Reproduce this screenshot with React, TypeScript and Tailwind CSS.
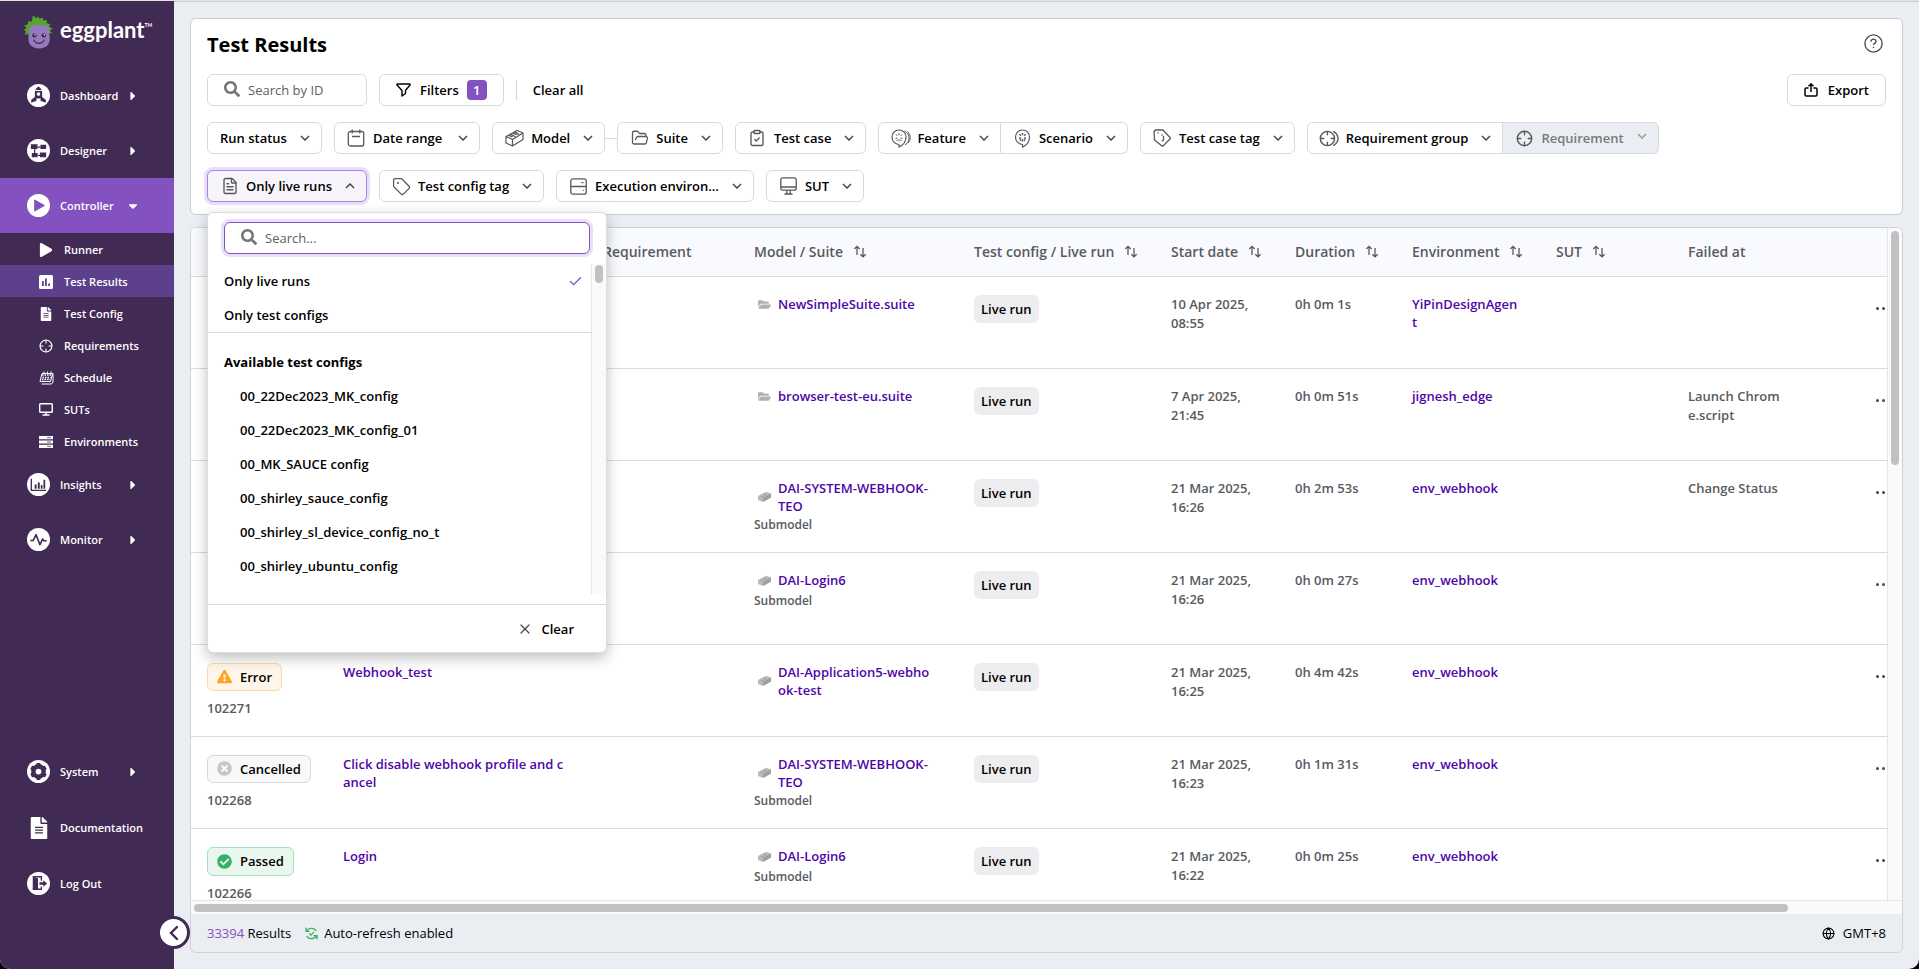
import { useState } from "react";
import type { ReactNode } from "react";
import { clsx } from "clsx";
import { Check, ClipboardCheck, FileText, FolderOpen, Globe, Tag, X } from "lucide-react";
import {
  FaCaretDown,
  FaCaretRight,
  FaCheckCircle,
  FaExclamationTriangle,
  FaFileAlt,
  FaFolderOpen,
  FaPlay,
  FaSearch,
  FaTimesCircle,
} from "react-icons/fa";

/* ---------- icons ---------- */

function Mascot() {
  return (
    <svg width="30" height="34" viewBox="0 0 30 34" className="shrink-0" aria-hidden="true">
      <path
        d="M8.500 1.200c1.600-.7 2.600.4 2.800 2l3-1.800 1 2.400 3.600-1 .4 2.600 4-.2-.8 2.700 4 1.300-1.600 2.200 4 2.600-3 1 2 3.600-3-.4.4 3.400H4.600L4 18.400l-3.200 1.800 1-4-2-1.200 3-2.200L0 10.800l4-1.600.2-3 3.200.6 1-2.800z"
        fill="#55a630"
      />
      <path
        d="M5 15c0-4 4-5 10-5s10.500 1 10.500 5c0 2-.6 3.500.2 7 1 6.500-3 11.500-10.600 11.500S3.500 28.500 4.600 22c.8-3.500.4-5 .4-7z"
        fill="#9479bd"
      />
      <circle cx="10.400" cy="20.400" r="2.200" fill="#412a54" />
      <circle cx="19.800" cy="20.400" r="2.200" fill="#412a54" />
      <circle cx="11" cy="19.800" r=".7" fill="#fff" />
      <circle cx="20.400" cy="19.800" r=".7" fill="#fff" />
      <path d="M9.800 25c2.200 4.400 8.200 4.400 10.400 0" fill="none" stroke="#412a54" strokeWidth="1.200" strokeLinecap="round" />
    </svg>
  );
}

function Disc({ children }: { children: ReactNode }) {
  return (
    <svg width="23" height="23" viewBox="0 0 24 24" fill="#412a54" aria-hidden="true">
      <circle cx="12" cy="12" r="12" fill="#fff" />
      {children}
    </svg>
  );
}

const DashboardIcon = () => (
  <Disc>
    <path d="M12 2.500c2.600 1.600 3.800 3.800 3.800 6v5l3.800 3v3l-4-1.500h-1.400v-3h-4.400v3H8.400l-4 1.500v-3l3.800-3v-5c0-2.200 1.200-4.400 3.800-6z" />
    <circle cx="12" cy="10.500" r="1.900" fill="#fff" />
    <path d="M8.500 6.800h7" stroke="#fff" />
  </Disc>
);

const DesignerIcon = () => (
  <Disc>
    <path d="M4 5.500h7v5H4zM14 6h6v4.500h-6zM5 14.500h6V19H5zM13.500 14h6.500v5h-6.500z" />
    <path d="M11 8.500h3M8 10v5M11 17h3" stroke="#412a54" strokeWidth="1.300" />
  </Disc>
);

const ControllerIcon = () => (
  <Disc>
    <path d="M8 6.200l10.200 5.800L8 17.800z" fill="#8452c0" stroke="#8452c0" strokeLinejoin="round" />
  </Disc>
);

const InsightsIcon = () => (
  <Disc>
    <path d="M4.500 6v12.200H20" fill="none" stroke="#412a54" strokeWidth="1.400" />
    <path d="M8 12h2v4.500H8zM11.300 10h2v6.500h-2zM14.400 12.500h1.800v4h-1.800zM17.200 7H19v9.500h-1.800z" />
  </Disc>
);

const MonitorIcon = () => (
  <Disc>
    <path
      d="M3.500 13h3L9.500 7l4 10.500 2.800-6 1.200 1.800h3"
      fill="none"
      stroke="#412a54"
      strokeWidth="1.700"
      strokeLinejoin="round"
    />
  </Disc>
);

const SystemIcon = () => (
  <Disc>
    <circle cx="12" cy="12" r="6.200" fill="none" stroke="#412a54" strokeWidth="3" />
    <path
      d="M12 3.200v3M12 17.800v3M4.400 7.600L7 9.100M17 14.900l2.600 1.500M4.400 16.400L7 14.900M17 9.100l2.600-1.500"
      stroke="#412a54"
      strokeWidth="4"
    />
    <circle cx="12" cy="12" r="5" fill="#412a54" />
    <circle cx="12" cy="12" r="3" fill="#fff" />
  </Disc>
);

const LogoutIcon = () => (
  <Disc>
    <path d="M6 5l5.500 1.500v12L6 18z" />
    <path d="M6 5h9v4M15 15v3H6" fill="none" stroke="#412a54" strokeWidth="1.400" />
    <path d="M13 10.800h4V8.500l4 3.500-4 3.500v-2.300h-4z" />
  </Disc>
);

const TestResultsIcon = () => (
  <svg width="14" height="14" viewBox="0 0 14 14" fill="#5d408c" aria-hidden="true">
    <rect width="14" height="14" rx="1.500" fill="#fff" />
    <path d="M3 6h1.800v5H3zM6 3.500h1.800V11H6zM9.200 8.500H11V11H9.200z" />
  </svg>
);

function Target({ size = 14, doubled = false }: { size?: number; doubled?: boolean }) {
  return (
    <svg
      width={doubled ? size + 3 : size}
      height={size}
      viewBox={doubled ? "0 0 19 16" : "0 0 16 16"}
      fill="none"
      stroke="currentColor"
      strokeWidth="1.300"
      strokeLinecap="round"
      className="shrink-0"
      aria-hidden="true"
    >
      <circle cx="8" cy="8" r="6.800" />
      <path d="M8 1.500v3M8 11.500v3M1.500 8h3M11.500 8h3" />
      {doubled && <path d="M14 1.500c5.400 3.500 5.400 9.500 0 13" />}
    </svg>
  );
}

const ScheduleIcon = () => (
  <svg width="15" height="14" viewBox="0 0 15 14" fill="none" stroke="#fff" aria-hidden="true">
    <path d="M3 2.500h11v8.500l-1.500 2H2.500" />
    <path d="M3 2.500L1 10.500h10.500l2-8" />
    <path d="M3 4h10M3.500 6.500h8M3 8.500h8" strokeDasharray="1.500 1" strokeWidth="1.300" />
    <path d="M5 .5v2M8.500.5v2M12 .5v2" />
  </svg>
);

const SutIcon = () => (
  <svg width="14" height="13" viewBox="0 0 14 13" fill="none" stroke="#fff" aria-hidden="true">
    <rect x=".7" y=".7" width="12.600" height="8.600" rx=".8" strokeWidth="1.400" />
    <path d="M7 9.500v2M3.500 12h7" strokeWidth="1.600" />
  </svg>
);

const EnvironmentsIcon = () => (
  <svg width="14" height="12" viewBox="0 0 14 12" aria-hidden="true">
    <path d="M0 0h14v3.200H0zM0 4.400h14v3.200H0zM0 8.800h14V12H0z" fill="#fff" />
    <path d="M8 1.600h4M8 6h4M8 10.400h4" stroke="#412a54" strokeWidth=".7" />
  </svg>
);

function Chevron({ up = false }: { up?: boolean }) {
  return (
    <svg width="10" height="6" viewBox="0 0 10 6" fill="none" stroke="currentColor" strokeWidth="1.500" aria-hidden="true">
      <path d={up ? "M1 5l4-4 4 4" : "M1 1l4 4 4-4"} />
    </svg>
  );
}

const CalendarIcon = () => (
  <svg width="18" height="18" viewBox="0 0 18 18" fill="none" stroke="currentColor" strokeWidth="1.300" aria-hidden="true">
    <rect x="1.300" y="2.500" width="15.400" height="14.500" rx="2" />
    <path d="M5.200.5v4M12.800.5v4M5 7.500h8" />
  </svg>
);

const BrickIcon = () => (
  <svg width="19" height="18" viewBox="0 0 19 18" fill="none" stroke="currentColor" strokeWidth="1.200" strokeLinejoin="round" aria-hidden="true">
    <path d="M1 7.500L12 1.500l6 2.500v6.500L7.500 17 1 14zM1 7.500l6.500 3L18 4M7.500 10.500V17" />
    <path d="M4.500 6.800l2-1.200 2 .9-2 1.200zM8.500 4.500l2-1.100 2 .9-2 1.200zM9 8l1.500-.9M12.500 5.800l1.700-1" />
  </svg>
);

const ServerIcon = () => (
  <svg width="17" height="17" viewBox="0 0 17 17" fill="none" stroke="currentColor" strokeWidth="1.300" aria-hidden="true">
    <rect x=".8" y=".8" width="15.400" height="15.400" rx="2" />
    <path d="M.8 8.500h15.400M11.500 4.700h2M12.800 12.300h.9" />
  </svg>
);

const ScreenIcon = () => (
  <svg width="17" height="18" viewBox="0 0 17 18" fill="none" stroke="currentColor" strokeWidth="1.300" aria-hidden="true">
    <rect x=".8" y=".8" width="15.400" height="12.400" rx="2" />
    <path d="M.8 10h15.400M6.800 13.200V16.500M10.200 13.200V16.500M4.500 17h8" />
  </svg>
);

function Gherkin({ doubled = false }: { doubled?: boolean }) {
  return (
    <svg
      width={doubled ? 20 : 17}
      height="19"
      viewBox={doubled ? "0 0 20 19" : "0 0 16 19"}
      fill="none"
      stroke="currentColor"
      strokeWidth="1.200"
      className="shrink-0"
      aria-hidden="true"
    >
      <path d="M8 1c4.200 0 7 3.200 7 7 0 5-3.500 8.500-7 10v-2.500C3.800 15.200 1 12 1 8.300 1 4.200 3.800 1 8 1z" />
      <path
        d="M8 4v2.200M8 10.300v2.200M5 5.200l1.200 1.600M11 5.200L9.800 6.800M4.500 9.500l2-.6M11.500 9.500l-2-.6M5.500 12l1-1.600M10.500 12l-1-1.600"
        strokeWidth={doubled ? 0.9 : 1.4}
      />
      {doubled && <path d="M13.500 1.800c6 3.500 6 11 .5 14M16.500 2.500c3.500 3.500 3.500 8.500.5 11.500" strokeWidth="1" />}
    </svg>
  );
}

const CaseTagIcon = () => (
  <svg width="18" height="18" viewBox="0 0 18 18" fill="none" stroke="currentColor" strokeWidth="1.300" strokeLinejoin="round" aria-hidden="true">
    <path d="M1 2.500L2.500 1H10l7 7.500c.5.500.5 1 0 1.500l-7 7H9L1.500 11z" />
    <path d="M4.500 4h1M10.500 7v3.500c0 1-1 1.500-2 1M8.500 6.500l1-1" />
  </svg>
);

const FunnelIcon = () => (
  <svg width="15" height="14" viewBox="0 0 15 14" fill="none" stroke="currentColor" strokeWidth="1.400" strokeLinejoin="round" aria-hidden="true">
    <path d="M1.500 1h12c.5 0 .7.600.5 1L9.500 7.500v3L6 13V7.500L1 2c-.3-.5 0-1 .5-1z" />
  </svg>
);

const ExportIcon = () => (
  <svg width="14" height="14" viewBox="0 0 14 14" fill="none" stroke="currentColor" strokeWidth="1.500" aria-hidden="true">
    <path d="M4.500 5H2.300Q1 5 1 6.300v5.400Q1 13 2.300 13h9.400q1.300 0 1.300-1.300V6.300Q13 5 11.700 5H9.500M7 9V1M4.500 3.200L7 .9l2.500 2.300" />
  </svg>
);

const HelpIcon = () => (
  <svg width="19" height="19" viewBox="0 0 19 19" fill="none" stroke="#4b4f54" strokeWidth="1.400" aria-hidden="true">
    <circle cx="9.500" cy="9.500" r="8.600" />
    <path d="M7 7.800C7 4.200 12 4.400 12 7.400c0 1.900-2.500 1.700-2.500 3.700M9.500 12.800v1.300" />
  </svg>
);

const SortIcon = () => (
  <svg width="14" height="13" viewBox="0 0 14 13" fill="none" stroke="currentColor" strokeWidth="1.300" aria-hidden="true">
    <path d="M4 10V1.500M1.300 4L4 1.300 6.700 4M10 3v9M7.300 9.200L10 11.900l2.700-2.700" />
  </svg>
);

const SmallBrick = () => (
  <svg width="13" height="11" viewBox="0 0 13 11" aria-hidden="true">
    <path d="M0 5L8 .8l5 1.600v4.200L5 11 0 9z" fill="#b9b9b9" />
    <path d="M5 6.800l8-4.400v4.200L5 11z" fill="#9f9f9f" />
    <path d="M2.500 4.800l2.500 1M5.500 3.300l2.500 1" stroke="#8e8e8e" strokeWidth=".7" fill="none" />
  </svg>
);

const RefreshIcon = () => (
  <svg width="13" height="13" viewBox="0 0 13 13" fill="none" stroke="#35b263" strokeWidth="1.300" aria-hidden="true">
    <path d="M1.500 5C2.500.7 9 0 11.300 4M1 .8v3.500h3.400M11.500 8C10.500 12.300 4 13 1.700 9M12 12.200V8.700H8.600" />
    <path d="M4.300 6.500L6 8.100l3-3.200" />
  </svg>
);

/* ---------- data ---------- */

type NavEntry = { label: string; icon: ReactNode; open?: boolean; leaf?: boolean };

const mainNav: NavEntry[] = [
  { label: "Dashboard", icon: <DashboardIcon /> },
  { label: "Designer", icon: <DesignerIcon /> },
  { label: "Controller", icon: <ControllerIcon />, open: true },
];

const controllerNav = [
  { label: "Runner", icon: <FaPlay size={14} /> },
  { label: "Test Results", icon: <TestResultsIcon />, active: true },
  { label: "Test Config", icon: <FaFileAlt size={14} /> },
  { label: "Requirements", icon: <Target /> },
  { label: "Schedule", icon: <ScheduleIcon /> },
  { label: "SUTs", icon: <SutIcon /> },
  { label: "Environments", icon: <EnvironmentsIcon /> },
];

const lowerNav: NavEntry[] = [
  { label: "Insights", icon: <InsightsIcon /> },
  { label: "Monitor", icon: <MonitorIcon /> },
];

const footerNav: NavEntry[] = [
  { label: "System", icon: <SystemIcon /> },
  { label: "Documentation", icon: <FaFileAlt size={22} />, leaf: true },
  { label: "Log Out", icon: <LogoutIcon />, leaf: true },
];

const testConfigs = [
  "00_22Dec2023_MK_config",
  "00_22Dec2023_MK_config_01",
  "00_MK_SAUCE config",
  "00_shirley_sauce_config",
  "00_shirley_sl_device_config_no_t",
  "00_shirley_ubuntu_config",
];

type Status = "Passed" | "Error" | "Cancelled";

type Run = {
  id?: string;
  status?: Status;
  name?: string;
  model: string;
  kind: "suite" | "model";
  submodel?: boolean;
  start: string;
  duration: string;
  environment: string;
  failedAt?: string;
};

const runs: Run[] = [
  { model: "NewSimpleSuite.suite", kind: "suite", start: "10 Apr 2025, 08:55", duration: "0h 0m 1s", environment: "YiPinDesignAgent" },
  { model: "browser-test-eu.suite", kind: "suite", start: "7 Apr 2025, 21:45", duration: "0h 0m 51s", environment: "jignesh_edge", failedAt: "Launch Chrome.script" },
  { model: "DAI-SYSTEM-WEBHOOK-TEO", kind: "model", submodel: true, start: "21 Mar 2025, 16:26", duration: "0h 2m 53s", environment: "env_webhook", failedAt: "Change Status" },
  { model: "DAI-Login6", kind: "model", submodel: true, start: "21 Mar 2025, 16:26", duration: "0h 0m 27s", environment: "env_webhook" },
  { id: "102271", status: "Error", name: "Webhook_test", model: "DAI-Application5-webhook-test", kind: "model", start: "21 Mar 2025, 16:25", duration: "0h 4m 42s", environment: "env_webhook" },
  { id: "102268", status: "Cancelled", name: "Click disable webhook profile and cancel", model: "DAI-SYSTEM-WEBHOOK-TEO", kind: "model", submodel: true, start: "21 Mar 2025, 16:23", duration: "0h 1m 31s", environment: "env_webhook" },
  { id: "102266", status: "Passed", name: "Login", model: "DAI-Login6", kind: "model", submodel: true, start: "21 Mar 2025, 16:22", duration: "0h 0m 25s", environment: "env_webhook" },
];

const columns = [
  { label: "", width: "w-[136px]" },
  { label: "", width: "w-[260px]" },
  { label: "Requirement", width: "w-[151px]" },
  { label: "Model / Suite", width: "w-[220px]", sortable: true },
  { label: "Test config / Live run", width: "w-[197px]", sortable: true },
  { label: "Start date", width: "w-[124px]", sortable: true },
  { label: "Duration", width: "w-[117px]", sortable: true },
  { label: "Environment", width: "w-[144px]", sortable: true },
  { label: "SUT", width: "w-[132px]", sortable: true },
  { label: "Failed at", width: "w-[128px]" },
  { label: "", width: "w-[112px]" },
];

/* ---------- sidebar ---------- */

function NavItem({ label, icon, open, leaf }: NavEntry) {
  return (
    <a
      href="#"
      className={clsx("flex h-[55px] items-center pl-[27px] text-[11px] font-semibold text-white", open && "bg-[#8452c0]")}
    >
      <span className="flex w-[23px] shrink-0 justify-center">{icon}</span>
      <span className="ml-[10px] w-[66px] whitespace-nowrap">{label}</span>
      {!leaf && (open ? <FaCaretDown size={14} /> : <FaCaretRight size={14} />)}
    </a>
  );
}

function Sidebar() {
  return (
    <nav className="relative z-10 flex w-[174px] shrink-0 flex-col bg-[#412a54]">
      <div className="flex h-[67px] pt-[14px] pl-6">
        <Mascot />
        <span className="ml-[6px] font-[Lato] text-[22px] leading-[30px] font-bold text-white">eggplant</span>
        <span className="font-[Lato] text-[5px] leading-[20px] font-bold text-white">TM</span>
      </div>

      {mainNav.map((item) => (
        <NavItem key={item.label} {...item} />
      ))}
      {controllerNav.map((item) => (
        <a
          key={item.label}
          href="#"
          className={clsx(
            "flex h-8 items-center pt-px pl-[38px] text-[11px] font-semibold text-white",
            item.active && "bg-[#5d408c]",
          )}
        >
          <span className="flex w-4 shrink-0 justify-center">{item.icon}</span>
          <span className="ml-[10px] whitespace-nowrap">{item.label}</span>
        </a>
      ))}
      {lowerNav.map((item) => (
        <NavItem key={item.label} {...item} />
      ))}

      <div className="mt-auto flex flex-col gap-px pb-[58px]">
        {footerNav.map((item) => (
          <NavItem key={item.label} {...item} />
        ))}
      </div>

      <button
        type="button"
        aria-label="Collapse menu"
        className="absolute right-[-16px] bottom-[20px] flex size-[33px] items-center justify-center rounded-full border-[3px] border-[#412a54] bg-white text-[#412a54]"
      >
        <svg width="10" height="16" viewBox="0 0 10 16" fill="none" stroke="currentColor" strokeWidth="2.400" strokeLinecap="round">
          <path d="M8 2L2 8l6 6" />
        </svg>
      </button>
    </nav>
  );
}

/* ---------- filters ---------- */

type FilterProps = {
  label: string;
  icon?: ReactNode;
  open?: boolean;
  disabled?: boolean;
  wide?: boolean;
  join?: "left" | "right";
  onClick?: () => void;
};

function Filter({ label, icon, open, disabled, wide, join, onClick }: FilterProps) {
  return (
    <button
      type="button"
      aria-haspopup="listbox"
      aria-expanded={!!open}
      disabled={disabled}
      onClick={onClick}
      className={clsx(
        "flex h-8 items-center rounded-md border pr-[11px] pl-3 font-semibold whitespace-nowrap",
        open ? "border-[#a984dc] bg-[#f7f4fc] ring-3 ring-[#e9dffb]" : "border-[#d8dade]",
        disabled && "bg-[#eaedf2] text-[#77797d]",
        join === "left" && "rounded-r-none",
        join === "right" && "rounded-l-none border-l-0",
      )}
    >
      {icon && <span className="mr-[7px] flex w-[19px] shrink-0 justify-center text-[#55585c]">{icon}</span>}
      {label}
      <span className={clsx(wide ? "ml-4" : "ml-[13px]", disabled ? "mb-1 text-[#9a9da1]" : "text-[#45484c]")}>
        <Chevron up={open} />
      </span>
    </button>
  );
}

function LiveRunMenu() {
  return (
    <div className="absolute top-[42px] left-0 z-20 w-[400px] rounded-md border border-[#dcdde0] bg-white shadow-[0_5px_14px_rgba(0,0,0,0.25)]">
      <label className="mx-4 mt-[9px] flex h-8 items-center rounded-md border border-[#8452c0] pl-4 ring-3 ring-[#e9dffb]">
        <FaSearch size={16} className="mb-0.5 shrink-0 text-[#757575]" />
        <input
          type="text"
          placeholder="Search..."
          aria-label="Search test configs"
          className="ml-2 min-w-0 flex-1 outline-none placeholder:text-[#5c5f63] placeholder:opacity-100"
        />
      </label>

      <div className="my-[10px] flex h-[330px]">
        <ul role="listbox" aria-label="Test configs" className="flex-1 overflow-hidden font-semibold">
          <li role="option" aria-selected="true" className="flex h-[34px] items-center justify-between pr-2 pl-4">
            Only live runs
            <Check size={15} strokeWidth={2.2} className="text-[#8452c0]" />
          </li>
          <li role="option" aria-selected="false" className="flex h-[35px] items-center border-b border-[#d8dade] pl-4">
            Only test configs
          </li>
          <li role="presentation" className="mt-3 flex h-[34px] items-center pl-4 font-bold">
            Available test configs
          </li>
          {testConfigs.map((config) => (
            <li key={config} role="option" aria-selected="false" className="flex h-[34px] items-center pl-8">
              {config}
            </li>
          ))}
        </ul>
        <div className="w-[15px] border-l border-[#e6e6e6] bg-[#fafafa] px-[3px] pt-px">
          <div className="h-[18px] rounded-full bg-[#c1c1c1]" />
        </div>
      </div>

      <div className="flex h-12 items-center justify-end border-t border-[#d8dade] pr-8">
        <button type="button" className="flex items-center gap-2 font-semibold">
          <X size={16} strokeWidth={1.8} className="text-[#45484c]" />
          Clear
        </button>
      </div>
    </div>
  );
}

function FilterPanel() {
  const [menuOpen, setMenuOpen] = useState(true);

  return (
    <section className="relative z-10 shrink-0 rounded-md border border-[#c9ccd3] bg-white px-4 py-3">
      <div className="mb-[15px] flex items-center justify-between">
        <h1 className="text-xl leading-7 font-bold">Test Results</h1>
        <button type="button" aria-label="Help" className="mr-[3px] mb-1">
          <HelpIcon />
        </button>
      </div>

      <div className="flex items-center">
        <label className="flex h-8 w-40 items-center rounded-md border border-[#d8dade] pl-4">
          <FaSearch size={16} className="mb-0.5 shrink-0 text-[#757575]" />
          <input
            type="text"
            placeholder="Search by ID"
            aria-label="Search by ID"
            className="ml-2 w-full min-w-0 outline-none placeholder:text-[#5c5f63] placeholder:opacity-100"
          />
        </label>
        <button type="button" className="ml-3 flex h-8 items-center rounded-md border border-[#d8dade] px-4 font-semibold">
          <FunnelIcon />
          <span className="ml-[9px]">Filters</span>
          <span className="ml-2 flex size-5 items-center justify-center rounded bg-[#8452c0] text-white">1</span>
        </button>
        <div className="ml-3 h-5 w-px bg-[#d0d3d8]" />
        <button type="button" className="ml-4 font-semibold">
          Clear all
        </button>
        <button type="button" className="ml-auto flex h-8 items-center gap-[10px] rounded-md border border-[#d8dade] px-4 font-semibold">
          <ExportIcon />
          Export
        </button>
      </div>

      <div className="mt-4 flex flex-wrap items-center gap-x-3 gap-y-4">
        <Filter label="Run status" />
        <Filter label="Date range" icon={<CalendarIcon />} wide />
        <div className="flex items-center">
          <Filter label="Model" icon={<BrickIcon />} />
          <span className="h-px w-3 bg-[#d8dade]" />
          <Filter label="Suite" icon={<FolderOpen size={18} strokeWidth={1.7} />} />
        </div>
        <Filter label="Test case" icon={<ClipboardCheck size={18} strokeWidth={1.8} />} />
        <div className="flex">
          <Filter label="Feature" icon={<Gherkin doubled />} join="left" />
          <Filter label="Scenario" icon={<Gherkin />} join="right" />
        </div>
        <Filter label="Test case tag" icon={<CaseTagIcon />} />
        <div className="flex">
          <Filter label="Requirement group" icon={<Target size={17} doubled />} join="left" />
          <Filter label="Requirement" icon={<Target size={17} />} join="right" disabled />
        </div>
      </div>

      <div className="mt-4 flex flex-wrap items-center gap-x-3 gap-y-4">
        <div className="relative">
          <Filter
            label="Only live runs"
            icon={<FileText size={18} strokeWidth={1.8} />}
            open={menuOpen}
            onClick={() => setMenuOpen(!menuOpen)}
          />
          {menuOpen && <LiveRunMenu />}
        </div>
        <Filter label="Test config tag" icon={<Tag size={19} strokeWidth={1.6} />} />
        <Filter label="Execution environ..." icon={<ServerIcon />} />
        <Filter label="SUT" icon={<ScreenIcon />} />
      </div>
    </section>
  );
}

/* ---------- results ---------- */

function StatusBadge({ status }: { status: Status }) {
  return (
    <span
      className={clsx(
        "inline-flex items-center gap-2 rounded-md border px-[9px] text-black",
        status === "Error" && "h-7 border-[#fbd9a4] bg-[#fff5e9]",
        status === "Cancelled" && "h-7 border-[#d8d9db] bg-[#f8f8f9]",
        status === "Passed" && "h-[29px] border-[#a9dfbb] bg-[#e9f7ee]",
      )}
    >
      {status === "Error" && <FaExclamationTriangle size={15} className="text-[#fda429]" />}
      {status === "Cancelled" && <FaTimesCircle size={15} className="text-[#c6c6c6]" />}
      {status === "Passed" && <FaCheckCircle size={15} className="text-[#35b263]" />}
      {status}
    </span>
  );
}

function ResultRow({ run }: { run: Run }) {
  return (
    <tr className="h-[92px] border-t border-[#d8dade] align-top *:px-4 *:pt-[18px]">
      <td>
        {run.status && (
          <div className="flex flex-col items-start pb-[18px]">
            <StatusBadge status={run.status} />
            <span className="mt-2 leading-[19px]">{run.id}</span>
          </div>
        )}
      </td>
      <td className="leading-[18px] break-all">
        {run.name && (
          <a href="#" className="block max-w-[226px] text-[#4e06a8]">
            {run.name}
          </a>
        )}
      </td>
      <td />
      <td>
        <div className="flex min-h-5 items-start">
          <span className="ml-1 flex w-[13px] shrink-0 self-center text-[#b0b0b0]">
            {run.kind === "suite" ? <FaFolderOpen size={13} /> : <SmallBrick />}
          </span>
          <a href="#" className="ml-[7px] max-w-[155px] leading-[18px] break-all text-[#4e06a8]">
            {run.model}
          </a>
        </div>
        {run.submodel && <div className="mt-px text-xs leading-[18px]">Submodel</div>}
      </td>
      <td>
        <span className="inline-flex h-7 items-center rounded-md bg-[#ecedef] px-[7px] text-black">Live run</span>
      </td>
      <td className="leading-[19px]">{run.start}</td>
      <td className="leading-[19px] whitespace-nowrap">{run.duration}</td>
      <td className="leading-[18px] break-all">
        <a href="#" className="block max-w-[108px] text-[#4e06a8]">
          {run.environment}
        </a>
      </td>
      <td />
      <td className="leading-[19px] break-all">{run.failedAt}</td>
      <td>
        <button type="button" aria-label="More actions" className="ml-[60px] flex h-7 items-center gap-[3px]">
          <span className="size-[3px] rounded-full bg-[#45484c]" />
          <span className="size-[3px] rounded-full bg-[#45484c]" />
          <span className="size-[3px] rounded-full bg-[#45484c]" />
        </button>
      </td>
    </tr>
  );
}

function ResultsPanel() {
  return (
    <section className="mt-3 flex min-h-0 flex-1 flex-col overflow-hidden rounded-md border border-[#cfd2d8]">
      <div className="flex min-h-0 flex-1 bg-white">
        <div className="min-w-0 flex-1 overflow-hidden">
          <table className="w-[1721px] table-fixed border-collapse font-semibold text-[#585a5e]">
            <thead>
              <tr className="h-12 bg-[#f9faff] text-left text-sm">
                {columns.map((column, i) => (
                  <th key={i} className={clsx("px-4 font-semibold whitespace-nowrap", column.width)}>
                    <span className="flex items-center gap-[10px]">
                      {column.label}
                      {column.sortable && <SortIcon />}
                    </span>
                  </th>
                ))}
              </tr>
            </thead>
            <tbody>
              {runs.map((run, i) => (
                <ResultRow key={i} run={run} />
              ))}
            </tbody>
          </table>
        </div>
        <div className="w-[15px] shrink-0 border-l border-[#e6e6e6] bg-[#fafafa] px-[3px] pt-[3px]">
          <div className="h-[35%] rounded-full bg-[#c1c1c1]" />
        </div>
      </div>
      <div className="h-[14px] shrink-0 border-t border-[#e6e6e6] bg-[#fafafa] px-[3px] py-[3px]">
        <div className="h-2 w-[93.500%] rounded-full bg-[#c1c1c1]" />
      </div>

      <footer className="flex h-[38px] shrink-0 items-center px-4 font-medium">
        <span>
          <span className="font-normal text-[#8452c0]">33394</span> Results
        </span>
        <span className="ml-[14px] flex items-center gap-[6px]">
          <RefreshIcon />
          Auto-refresh enabled
        </span>
        <span className="ml-auto flex items-center gap-2">
          <Globe size={13} strokeWidth={2} />
          GMT+8
        </span>
      </footer>
    </section>
  );
}

export default function App() {
  return (
    <div className="h-screen bg-black font-['Open_Sans',sans-serif] text-[13px] leading-5 text-black">
      <div className="flex h-full overflow-hidden rounded-b-[10px] border-t border-[#dfe3dd] bg-[#eaedf2]">
        <Sidebar />
        <main className="flex min-w-0 flex-1 flex-col border-t border-[#cdd0d3] px-4 pt-4 pb-4">
          <FilterPanel />
          <ResultsPanel />
        </main>
      </div>
    </div>
  );
}
